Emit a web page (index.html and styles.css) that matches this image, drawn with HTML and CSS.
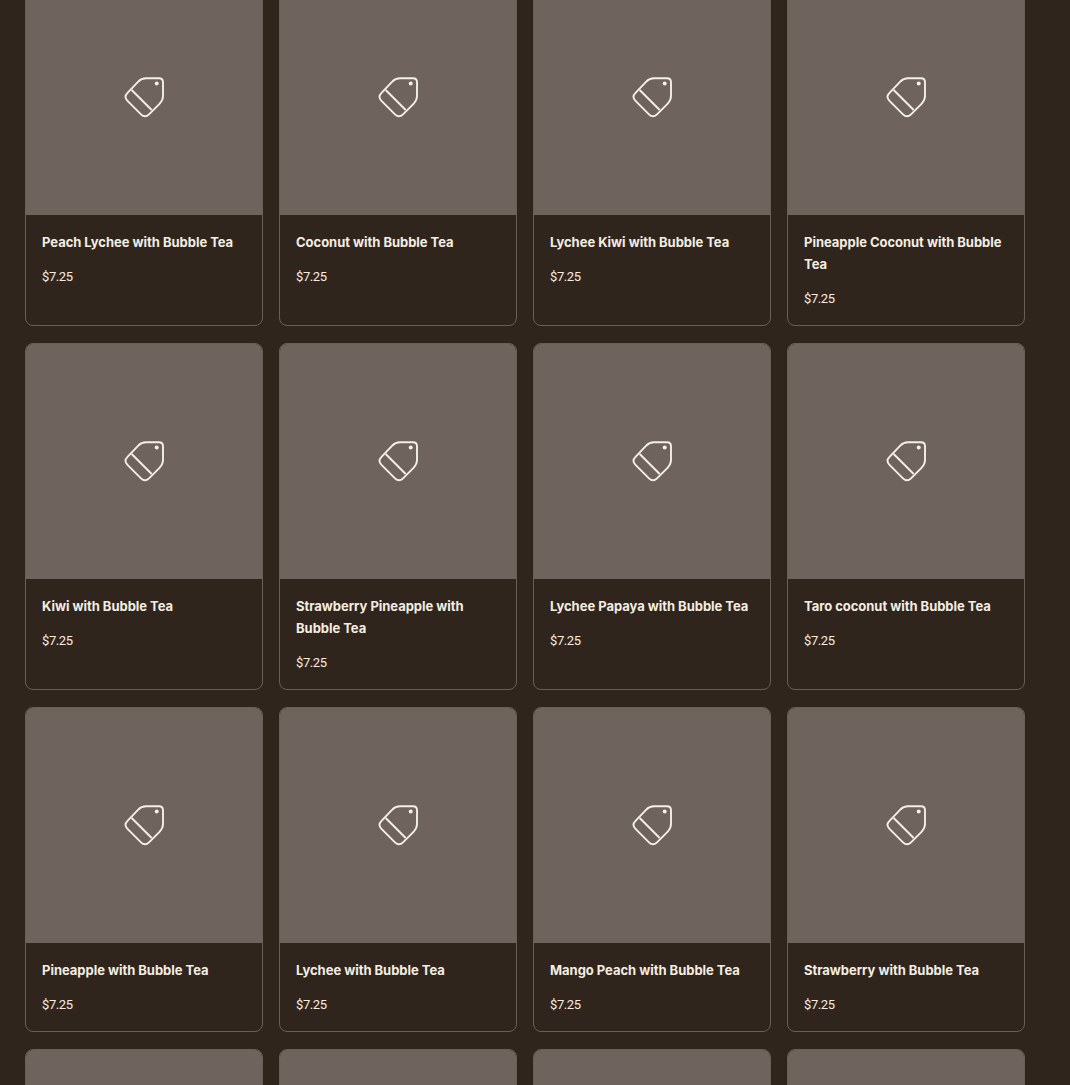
FILE: index.html
```html
<!DOCTYPE html>
<html lang="en">
<head>
    <meta charset="UTF-8">
    <meta name="viewport" content="width=device-width, initial-scale=1.0">
    <title>Bubble Tea</title>
    <link rel="stylesheet" href="styles.css">
</head>
<body>
    <svg class="sprite" width="0" height="0" aria-hidden="true">
        <symbol id="tag" viewBox="0 0.7 42 42">
            <path d="M23 2H36Q40 2 40 6V20Q40 24 36.5 27.5L26 38Q22 42 18 38L4.5 24.5Q.5 20.5 4.5 16.5L15 5.5Q18.5 2 23 2Z" fill="none" stroke="currentColor" stroke-width="1.9" stroke-linejoin="round"/>
            <path d="M8.7 13.7 28.7 33.7" fill="none" stroke="currentColor" stroke-width="1.9"/>
            <circle cx="33.7" cy="7.3" r="2" fill="currentColor"/>
        </symbol>
    </svg>
    <main class="product-grid">
        <a class="card"><div class="card-img"><svg class="tag"><use href="#tag"/></svg></div><div class="card-body"><h3>Peach Lychee with Bubble Tea</h3><p>$7.25</p></div></a>
        <a class="card"><div class="card-img"><svg class="tag"><use href="#tag"/></svg></div><div class="card-body"><h3>Coconut with Bubble Tea</h3><p>$7.25</p></div></a>
        <a class="card"><div class="card-img"><svg class="tag"><use href="#tag"/></svg></div><div class="card-body"><h3>Lychee Kiwi with Bubble Tea</h3><p>$7.25</p></div></a>
        <a class="card"><div class="card-img"><svg class="tag"><use href="#tag"/></svg></div><div class="card-body"><h3>Pineapple Coconut with Bubble Tea</h3><p>$7.25</p></div></a>
        <a class="card"><div class="card-img"><svg class="tag"><use href="#tag"/></svg></div><div class="card-body"><h3>Kiwi with Bubble Tea</h3><p>$7.25</p></div></a>
        <a class="card"><div class="card-img"><svg class="tag"><use href="#tag"/></svg></div><div class="card-body"><h3>Strawberry Pineapple with Bubble Tea</h3><p>$7.25</p></div></a>
        <a class="card"><div class="card-img"><svg class="tag"><use href="#tag"/></svg></div><div class="card-body"><h3>Lychee Papaya with Bubble Tea</h3><p>$7.25</p></div></a>
        <a class="card"><div class="card-img"><svg class="tag"><use href="#tag"/></svg></div><div class="card-body"><h3>Taro coconut with Bubble Tea</h3><p>$7.25</p></div></a>
        <a class="card"><div class="card-img"><svg class="tag"><use href="#tag"/></svg></div><div class="card-body"><h3>Pineapple with Bubble Tea</h3><p>$7.25</p></div></a>
        <a class="card"><div class="card-img"><svg class="tag"><use href="#tag"/></svg></div><div class="card-body"><h3>Lychee with Bubble Tea</h3><p>$7.25</p></div></a>
        <a class="card"><div class="card-img"><svg class="tag"><use href="#tag"/></svg></div><div class="card-body"><h3>Mango Peach with Bubble Tea</h3><p>$7.25</p></div></a>
        <a class="card"><div class="card-img"><svg class="tag"><use href="#tag"/></svg></div><div class="card-body"><h3>Strawberry with Bubble Tea</h3><p>$7.25</p></div></a>
        <a class="card"><div class="card-img"></div></a>
        <a class="card"><div class="card-img"></div></a>
        <a class="card"><div class="card-img"></div></a>
        <a class="card"><div class="card-img"></div></a>
    </main>
</body>
</html>
```

FILE: styles.css
```css
html, body {
    height: 1085px;
    overflow: hidden;
}
body {
    margin: 0;
    background-color: #30251d;
    color: #f4ede1;
    font-family: 'Inter', sans-serif;
}
.sprite {
    display: block;
}
.product-grid {
    display: grid;
    grid-template-columns: repeat(4, 238px);
    column-gap: 16px;
    row-gap: 17px;
    padding-left: 25px;
    margin-top: -21px;
}
.card {
    display: flex;
    flex-direction: column;
    border: 1px solid #6b5f55;
    border-radius: 8px;
    overflow: hidden;
}
.card-img {
    height: 235px;
    flex: none;
    background-color: #6e645d;
    display: flex;
    align-items: center;
    justify-content: center;
}
.tag {
    width: 42px;
    height: 42px;
    color: #f5efe5;
}
.card-body {
    padding: 16px 16px 15px;
}
.card-body h3 {
    margin: 0;
    font-size: 13px;
    font-weight: 700;
    letter-spacing: -0.03px;
    line-height: 22px;
}
.card-body p {
    margin: 12px 0 0;
    padding-top: 1px;
    font-family: 'Roboto', sans-serif;
    font-size: 13px;
    letter-spacing: -0.4px;
    line-height: 22px;
}
```
